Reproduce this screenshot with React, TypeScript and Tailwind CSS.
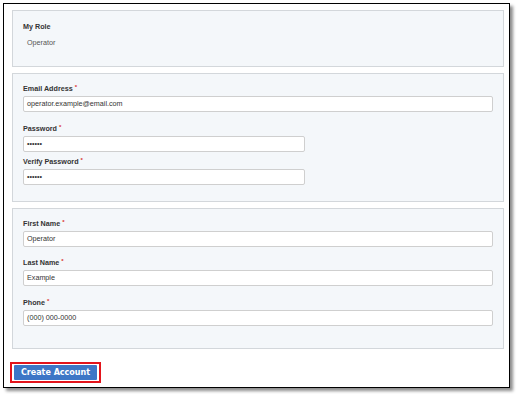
const Req = () => (
  <span className="relative -top-[2px] ml-[2px] text-[6px] leading-[0] text-[#d9302c]">*</span>
);

function Field({
  label,
  value,
  wide = true,
  className = "",
}: {
  label: string;
  value: string;
  wide?: boolean;
  className?: string;
}) {
  return (
    <div className={className}>
      <label className="block h-[9px] text-[7.2px] font-bold leading-[9px] text-[#333]">
        {label}
        <Req />
      </label>
      <div
        className={`mt-[3px] flex h-[16px] items-center rounded-[2px] border border-[#cfcfcf] bg-white px-[3px] text-[7.2px] text-[#333] ${
          wide ? "w-full" : "w-[282px]"
        }`}
      >
        {value}
      </div>
    </div>
  );
}

export default function App() {
  return (
    <div
      className="h-[394px] w-[518px] bg-white pl-[3px] pt-[3px]"
      style={{ fontFamily: '"Liberation Sans", Arial, sans-serif' }}
    >
      <div className="h-[385px] w-[507px] border border-black bg-white pl-[8px] pr-[5px] pt-[6px] shadow-[3px_3px_3px_rgba(0,0,0,0.45)]">
        <div className="flex flex-col gap-[6px]">
          {/* role */}
          <section className="h-[57px] border border-[#d3d7db] bg-[#f4f7fa] px-[10px] pt-[11px]">
            <div className="text-[7.2px] font-bold leading-[9px] text-[#333]">My Role</div>
            <div className="mt-[7px] pl-[4px] text-[7.2px] leading-[9px] text-[#555]">Operator</div>
          </section>

          {/* login */}
          <section className="h-[129px] border border-[#d3d7db] bg-[#f4f7fa] px-[10px] pt-[10px]">
            <Field label="Email Address" value="operator.example@email.com" />
            <Field label="Password" value="••••••" wide={false} className="mt-[12px]" />
            <Field label="Verify Password" value="••••••" wide={false} className="mt-[5px]" />
          </section>

          {/* contact */}
          <section className="h-[141px] border border-[#d3d7db] bg-[#f4f7fa] px-[10px] pt-[10px]">
            <Field label="First Name" value="Operator" />
            <Field label="Last Name" value="Example" className="mt-[11px]" />
            <Field label="Phone" value="(000) 000-0000" className="mt-[12px]" />
          </section>
        </div>

        <div className="-ml-[2px] mt-[13px] inline-flex border-2 border-[#e3141b] px-[2px] py-[1px]">
          <button
            className="flex h-[15px] w-[83px] items-center justify-center rounded-[1px] bg-[#3d76c6] text-[8px] font-bold text-white"
            style={{ fontFamily: '"DejaVu Sans", Verdana, sans-serif' }}
          >
            Create Account
          </button>
        </div>
      </div>
    </div>
  );
}
